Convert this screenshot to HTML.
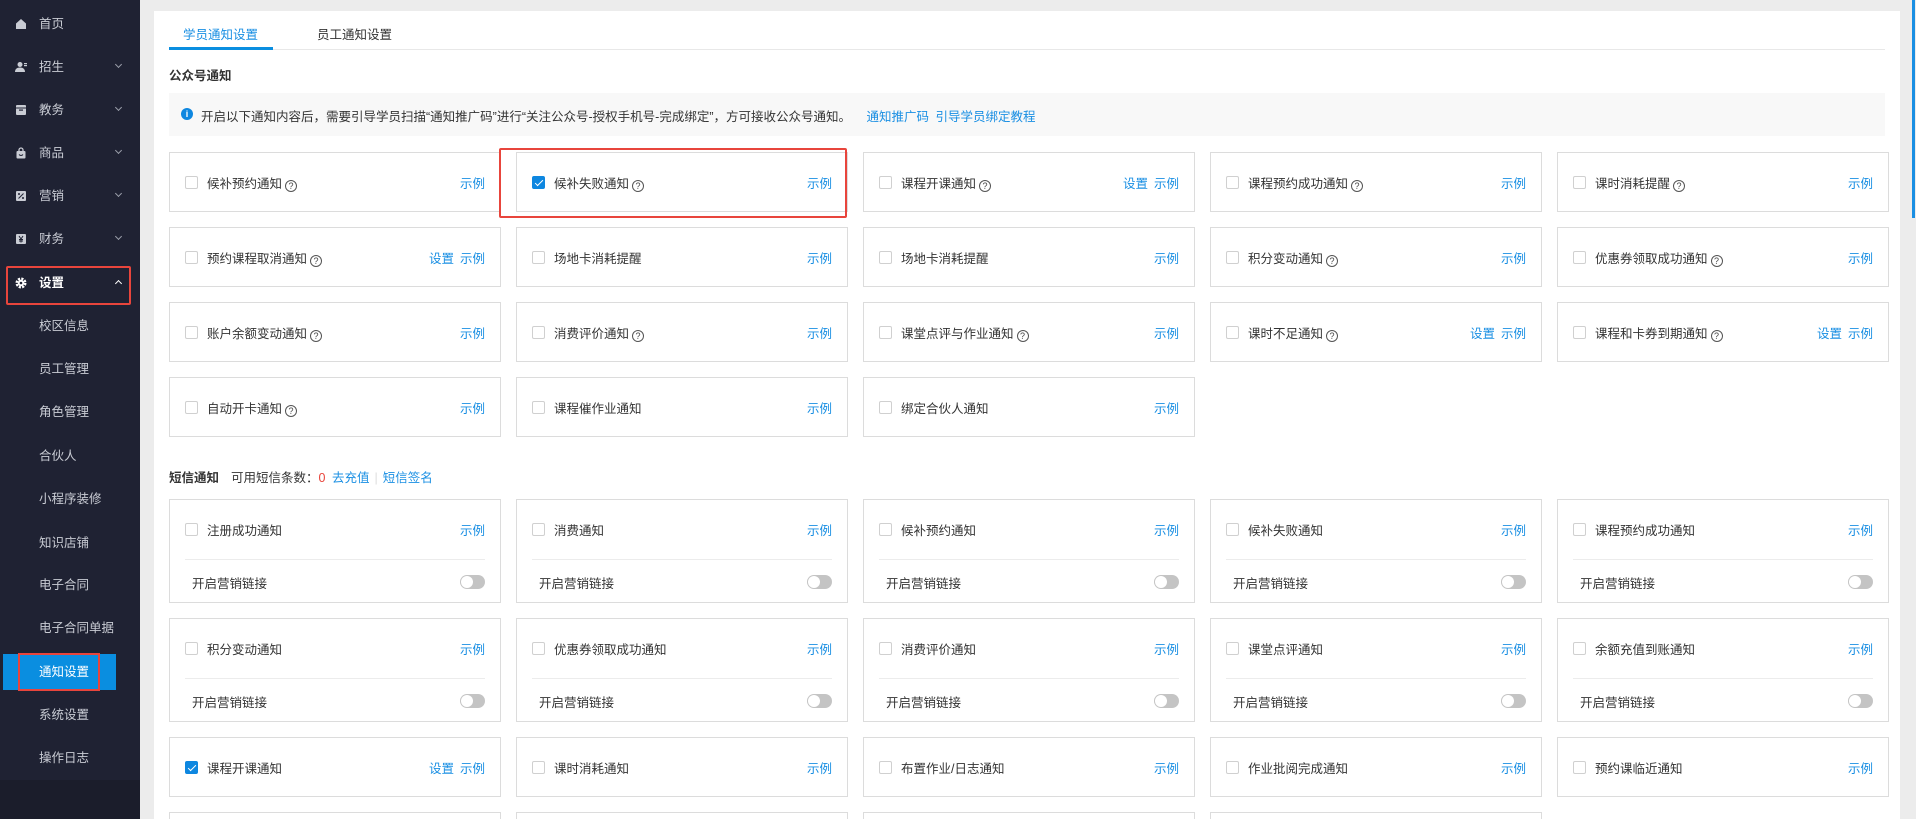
<!DOCTYPE html>
<html><head><meta charset="utf-8"><style>
*{box-sizing:border-box;margin:0;padding:0}
html,body{width:1916px;height:819px;overflow:hidden}
body{background:#ececec;font-family:"Liberation Sans","Noto Sans CJK SC",sans-serif;font-size:12.5px;color:#333;position:relative}
.sb{position:absolute;left:0;top:0;width:140px;height:819px;background:#1f2233}
.sb .it{position:absolute;left:0;width:140px;height:20px;line-height:20px;color:#c9ccd4;font-size:12.5px}
.sb .it span.t{position:absolute;left:39px}
.sb svg{position:absolute;left:15px;top:4px;width:12px;height:12px}
.sb .chev{position:absolute;left:116px;top:5px;width:5px;height:5px;border-right:1px solid #9a9eaa;border-bottom:1px solid #9a9eaa;transform:rotate(45deg)}
.main{position:absolute;left:154px;top:11px;width:1746px;height:808px;background:#fff}
.a{position:absolute}
.blue{color:#1a8fe3}
.grid{position:absolute;left:169px;display:grid;grid-template-columns:repeat(5,332px);column-gap:15px;row-gap:15px}
.c{height:60px;border:1px solid #dcdcdc;background:#fff;position:relative;display:flex;align-items:center;padding:0 15px}
.c.p{height:7px;border-bottom:none}
.cb{width:13px;height:13px;border:1px solid #d0d0d0;border-radius:2px;flex:none;position:relative}
.cb.on{background:#0e87e0;border-color:#0e87e0}
.cb.on:after{content:"";position:absolute;left:3.5px;top:1px;width:3px;height:7px;border-right:1.5px solid #fff;border-bottom:1.5px solid #fff;transform:rotate(45deg)}
.lb{margin-left:9px;flex:1;white-space:nowrap}
.q{display:inline-block;width:12px;height:12px;border:1px solid #555;border-radius:50%;font-size:9px;line-height:10px;text-align:center;margin-left:3px;vertical-align:-1px;color:#444;font-style:normal}
.lk{color:#1a8fe3;white-space:nowrap}
.lk b{font-weight:normal;margin-right:6px}
.s{height:104px;border:1px solid #dcdcdc;position:relative}
.s .top{position:absolute;left:15px;right:15px;top:0;height:60px;display:flex;align-items:center;border-bottom:1px solid #ececec}
.s .bot{position:absolute;left:22px;top:73px;color:#333}
.tg{position:absolute;right:15px;top:75px;width:25px;height:14px;background:#c4c4c4;border-radius:7px}
.tg:after{content:"";position:absolute;left:1px;top:1px;width:12px;height:12px;border-radius:50%;background:#fff}
</style></head><body>
<div class="sb">
<div class="it" style="top:14px"><svg viewBox="0 0 12 12"><path d="M6 1L1 5.5V11h10V5.5z" fill="#c9ccd4"/></svg><span class="t">首页</span></div>
<div class="it" style="top:57px"><svg viewBox="0 0 12 12"><circle cx="5" cy="3.5" r="2.5" fill="#c9ccd4"/><path d="M0 11c0-3 2-4.5 5-4.5s5 1.5 5 4.5z" fill="#c9ccd4"/><rect x="9" y="2" width="3" height="1.2" fill="#c9ccd4"/><rect x="9" y="4" width="3" height="1.2" fill="#c9ccd4"/></svg><span class="t">招生</span><i class="chev"></i></div>
<div class="it" style="top:100px"><svg viewBox="0 0 12 12"><rect x="1" y="1" width="10" height="10" rx="1" fill="#c9ccd4"/><rect x="1" y="3.5" width="10" height="1" fill="#1f2233"/><rect x="4" y="5.5" width="4" height="1.2" fill="#1f2233"/></svg><span class="t">教务</span><i class="chev"></i></div>
<div class="it" style="top:143px"><svg viewBox="0 0 12 12"><path d="M4 4V3a2 2 0 014 0v1" stroke="#c9ccd4" fill="none" stroke-width="1.3"/><rect x="1.5" y="4" width="9" height="7.5" rx="1" fill="#c9ccd4"/><path d="M4 7.5q2 2 4 0" stroke="#1f2233" fill="none"/></svg><span class="t">商品</span><i class="chev"></i></div>
<div class="it" style="top:186px"><svg viewBox="0 0 12 12"><rect x="1" y="1" width="10" height="10" rx="1" fill="#c9ccd4"/><path d="M3.5 8.5l5-5" stroke="#1f2233"/><circle cx="4" cy="4" r="1" fill="#1f2233"/><circle cx="8" cy="8" r="1" fill="#1f2233"/></svg><span class="t">营销</span><i class="chev"></i></div>
<div class="it" style="top:229px"><svg viewBox="0 0 12 12"><rect x="1" y="1" width="10" height="10" rx="1" fill="#c9ccd4"/><path d="M4 3l2 3 2-3M6 6v3.5M4 6.5h4M4 8h4" stroke="#1f2233" fill="none"/></svg><span class="t">财务</span><i class="chev"></i></div>
<div class="it" style="top:273px;color:#fff;font-weight:bold"><svg viewBox="0 0 12 12"><circle cx="6" cy="6" r="4.3" fill="none" stroke="#fff" stroke-width="2.4" stroke-dasharray="2.2 1.2"/><circle cx="6" cy="6" r="3.2" fill="#fff"/><circle cx="6" cy="6" r="1.3" fill="#1f2233"/></svg><span class="t">设置</span><i class="chev" style="transform:rotate(-135deg);top:8px;border-color:#fff"></i></div>
<div class="a" style="left:6px;top:266px;width:125px;height:39px;border:2px solid #e8453c;border-radius:2px"></div>
<div class="it" style="top:316px"><span class="t">校区信息</span></div>
<div class="it" style="top:359px"><span class="t">员工管理</span></div>
<div class="it" style="top:402px"><span class="t">角色管理</span></div>
<div class="it" style="top:446px"><span class="t">合伙人</span></div>
<div class="it" style="top:489px"><span class="t">小程序装修</span></div>
<div class="it" style="top:533px"><span class="t">知识店铺</span></div>
<div class="it" style="top:575px"><span class="t">电子合同</span></div>
<div class="it" style="top:618px"><span class="t">电子合同单据</span></div>
<div class="a" style="left:3px;top:654px;width:113px;height:36px;background:#0a8ee0"></div>
<div class="a" style="left:18px;top:653px;width:82px;height:38px;border:2px solid #e8453c"></div>
<div class="it" style="top:662px;color:#fff"><span class="t">通知设置</span></div>
<div class="it" style="top:705px"><span class="t">系统设置</span></div>
<div class="it" style="top:748px"><span class="t">操作日志</span></div>
<div class="a" style="left:0;top:780px;width:140px;height:39px;background:#1b1d2b"></div>
</div>
<div class="main"></div>
<div class="a" style="left:1912px;top:0;width:3px;height:218px;background:#1a8fe3"></div>
<div class="a" style="left:183px;top:24px;color:#1a8fe3">学员通知设置</div>
<div class="a" style="left:317px;top:24px">员工通知设置</div>
<div class="a" style="left:169px;top:49px;width:1716px;height:1px;background:#e8e8e8"></div>
<div class="a" style="left:169px;top:47px;width:104px;height:3px;background:#0a8ee0"></div>
<div class="a" style="left:169px;top:65px;font-weight:bold">公众号通知</div>
<div class="a" style="left:169px;top:93px;width:1716px;height:43px;background:#f8f8f8"></div>
<div class="a" style="left:181px;top:108px;width:12px;height:12px;border-radius:50%;background:#0e87e0;color:#fff;font-size:9px;line-height:12px;text-align:center;font-weight:bold">i</div>
<div class="a" style="left:201px;top:106px">开启以下通知内容后，需要引导学员扫描“通知推广码”进行“关注公众号-授权手机号-完成绑定”，方可接收公众号通知。 <span class="blue" style="margin-left:12px">通知推广码</span> <span class="blue" style="margin-left:3px">引导学员绑定教程</span></div>

<div class="grid" style="top:152px;grid-template-rows:repeat(4,60px)">
<div class="c"><i class="cb"></i><span class="lb">候补预约通知<i class="q">?</i></span><span class="lk">示例</span></div>
<div class="c"><i class="cb on"></i><span class="lb">候补失败通知<i class="q">?</i></span><span class="lk">示例</span></div>
<div class="c"><i class="cb"></i><span class="lb">课程开课通知<i class="q">?</i></span><span class="lk"><b>设置</b>示例</span></div>
<div class="c"><i class="cb"></i><span class="lb">课程预约成功通知<i class="q">?</i></span><span class="lk">示例</span></div>
<div class="c"><i class="cb"></i><span class="lb">课时消耗提醒<i class="q">?</i></span><span class="lk">示例</span></div>
<div class="c"><i class="cb"></i><span class="lb">预约课程取消通知<i class="q">?</i></span><span class="lk"><b>设置</b>示例</span></div>
<div class="c"><i class="cb"></i><span class="lb">场地卡消耗提醒</span><span class="lk">示例</span></div>
<div class="c"><i class="cb"></i><span class="lb">场地卡消耗提醒</span><span class="lk">示例</span></div>
<div class="c"><i class="cb"></i><span class="lb">积分变动通知<i class="q">?</i></span><span class="lk">示例</span></div>
<div class="c"><i class="cb"></i><span class="lb">优惠券领取成功通知<i class="q">?</i></span><span class="lk">示例</span></div>
<div class="c"><i class="cb"></i><span class="lb">账户余额变动通知<i class="q">?</i></span><span class="lk">示例</span></div>
<div class="c"><i class="cb"></i><span class="lb">消费评价通知<i class="q">?</i></span><span class="lk">示例</span></div>
<div class="c"><i class="cb"></i><span class="lb">课堂点评与作业通知<i class="q">?</i></span><span class="lk">示例</span></div>
<div class="c"><i class="cb"></i><span class="lb">课时不足通知<i class="q">?</i></span><span class="lk"><b>设置</b>示例</span></div>
<div class="c"><i class="cb"></i><span class="lb">课程和卡券到期通知<i class="q">?</i></span><span class="lk"><b>设置</b>示例</span></div>
<div class="c"><i class="cb"></i><span class="lb">自动开卡通知<i class="q">?</i></span><span class="lk">示例</span></div>
<div class="c"><i class="cb"></i><span class="lb">课程催作业通知</span><span class="lk">示例</span></div>
<div class="c"><i class="cb"></i><span class="lb">绑定合伙人通知</span><span class="lk">示例</span></div>
</div>
<div class="a" style="left:499px;top:148px;width:348px;height:70px;border:2px solid #e8453c;border-radius:2px"></div>

<div class="a" style="left:169px;top:467px"><b>短信通知</b><span style="margin-left:12px">可用短信条数：</span><span style="color:#e8453c">0</span> <span class="blue" style="margin-left:3px">去充值</span><span style="color:#ddd;margin:0 5px">|</span><span class="blue">短信签名</span></div>

<div class="grid" style="top:499px;grid-template-rows:104px 104px 60px 7px">
<div class="s"><div class="top"><i class="cb"></i><span class="lb">注册成功通知</span><span class="lk">示例</span></div><div class="bot">开启营销链接</div><i class="tg"></i></div>
<div class="s"><div class="top"><i class="cb"></i><span class="lb">消费通知</span><span class="lk">示例</span></div><div class="bot">开启营销链接</div><i class="tg"></i></div>
<div class="s"><div class="top"><i class="cb"></i><span class="lb">候补预约通知</span><span class="lk">示例</span></div><div class="bot">开启营销链接</div><i class="tg"></i></div>
<div class="s"><div class="top"><i class="cb"></i><span class="lb">候补失败通知</span><span class="lk">示例</span></div><div class="bot">开启营销链接</div><i class="tg"></i></div>
<div class="s"><div class="top"><i class="cb"></i><span class="lb">课程预约成功通知</span><span class="lk">示例</span></div><div class="bot">开启营销链接</div><i class="tg"></i></div>
<div class="s"><div class="top"><i class="cb"></i><span class="lb">积分变动通知</span><span class="lk">示例</span></div><div class="bot">开启营销链接</div><i class="tg"></i></div>
<div class="s"><div class="top"><i class="cb"></i><span class="lb">优惠券领取成功通知</span><span class="lk">示例</span></div><div class="bot">开启营销链接</div><i class="tg"></i></div>
<div class="s"><div class="top"><i class="cb"></i><span class="lb">消费评价通知</span><span class="lk">示例</span></div><div class="bot">开启营销链接</div><i class="tg"></i></div>
<div class="s"><div class="top"><i class="cb"></i><span class="lb">课堂点评通知</span><span class="lk">示例</span></div><div class="bot">开启营销链接</div><i class="tg"></i></div>
<div class="s"><div class="top"><i class="cb"></i><span class="lb">余额充值到账通知</span><span class="lk">示例</span></div><div class="bot">开启营销链接</div><i class="tg"></i></div>
<div class="c"><i class="cb on"></i><span class="lb">课程开课通知</span><span class="lk"><b>设置</b>示例</span></div>
<div class="c"><i class="cb"></i><span class="lb">课时消耗通知</span><span class="lk">示例</span></div>
<div class="c"><i class="cb"></i><span class="lb">布置作业/日志通知</span><span class="lk">示例</span></div>
<div class="c"><i class="cb"></i><span class="lb">作业批阅完成通知</span><span class="lk">示例</span></div>
<div class="c"><i class="cb"></i><span class="lb">预约课临近通知</span><span class="lk">示例</span></div>
<div class="c p"></div><div class="c p"></div><div class="c p"></div><div class="c p"></div>
</div>
</body></html>
